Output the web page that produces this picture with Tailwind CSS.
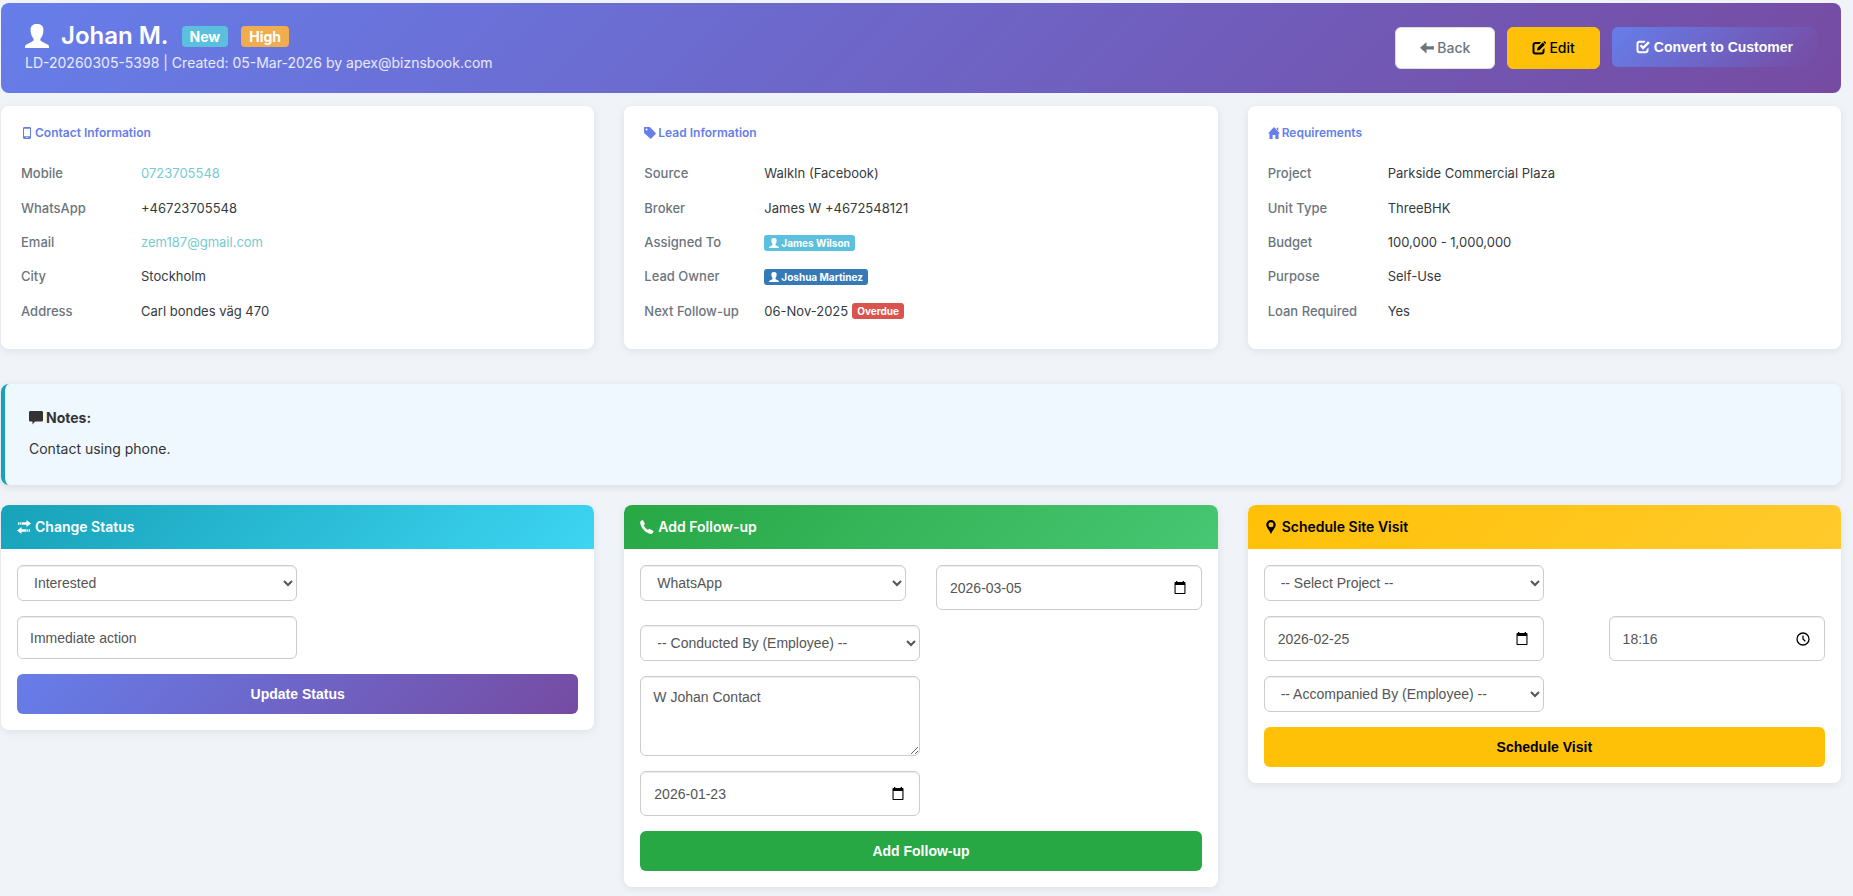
<!DOCTYPE html>
<html lang="en">
<head>
  <meta charset="UTF-8" />
  <meta name="viewport" content="width=device-width, initial-scale=1.0" />
  <title>Lead Details</title>
  <script src="https://cdn.jsdelivr.net/npm/@tailwindcss/browser@4"></script>
</head>
<body class="bg-[#f0f4f9] min-h-screen font-['Inter',sans-serif] text-sm leading-5 text-[#333]">

  <!-- Icons -->
  <svg class="hidden" xmlns="http://www.w3.org/2000/svg">
    <symbol id="i-user" viewBox="0 0 24 24"><path d="M12 0C8 0 5.600 2 5.600 5.500c0 3 .5 5.500 1.600 7.300.9 1.500 1.500 1.800 1.500 2.800 0 1-.7 1.500-1.900 2.100L2 20.200C.6 20.900 0 21.500 0 22.600V24h24v-1.400c0-1.100-.6-1.700-2-2.400l-4.800-2.500c-1.200-.6-1.900-1.100-1.900-2.100 0-1 .6-1.300 1.500-2.800 1.100-1.800 1.600-4.300 1.600-7.300C18.400 2 16 0 12 0z"/></symbol>
    <symbol id="i-phone" viewBox="0 0 14 14"><path fill-rule="evenodd" d="M4 0h6a1.700 1.700 0 0 1 1.700 1.700v10.600A1.700 1.700 0 0 1 10 14H4a1.700 1.700 0 0 1-1.700-1.700V1.700A1.700 1.700 0 0 1 4 0zM3.500 1.900v9h7v-9zM6 11.900v1h2v-1z"/></symbol>
    <symbol id="i-tag" viewBox="0 0 14 14"><path fill-rule="evenodd" d="M.6 0h5.600c.4 0 .8.200 1.100.5l6.300 6.500c.4.400.4.900 0 1.300L8.500 13.500c-.4.400-.9.400-1.300 0L.5 7.200C.2 6.900 0 6.500 0 6.100V.6C0 .2.200 0 .6 0zM3 1.800a1.200 1.200 0 1 0 0 2.400 1.200 1.200 0 0 0 0-2.400z"/></symbol>
    <symbol id="i-home" viewBox="0 0 14 14"><path d="M7 0 14 7.500h-1.700V14H8.600V9.200H5.400V14H1.700V7.500H0z"/><path d="M10 1h2v3.500l-2-2z"/></symbol>
    <symbol id="i-left" viewBox="0 0 14 14"><path d="M6.500 1.200v4H14v3.200H6.500v4L0 6.800z"/></symbol>
    <symbol id="i-edit" viewBox="0 0 14 14"><path d="M9 1H3.500A3 3 0 0 0 .5 4v6.500a3 3 0 0 0 3 3h6a3 3 0 0 0 3-3V7l-2 2v1.500a1 1 0 0 1-1 1h-6a1 1 0 0 1-1-1V4a1 1 0 0 1 1-1H7.500z"/><path d="m5 9.500.6-2.800L10.700 1.600l2.100 2.100-5.100 5.200zM11.300 1l.7-.7c.2-.2.400-.2.600 0l1.300 1.300c.2.200.2.400 0 .6l-.7.8z"/></symbol>
    <symbol id="i-check" viewBox="0 0 14 14"><path d="M9.500.8h-6a3 3 0 0 0-3 3v6.500a3 3 0 0 0 3 3h6a3 3 0 0 0 3-3V7.500l-2 2v.8a1 1 0 0 1-1 1h-6a1 1 0 0 1-1-1V3.800a1 1 0 0 1 1-1h5z"/><path d="m3.800 6 1.500-1.500L7 6.200l5-5 1.800 1.700L7 9.700z"/></symbol>
    <symbol id="i-comment" viewBox="0 0 14 14"><path d="M1.300 0h11.400c.7 0 1.300.6 1.300 1.300v7.900c0 .7-.6 1.300-1.300 1.300H6L3.500 13.500v-3H1.300C.6 10.500 0 9.900 0 9.200V1.300C0 .6.600 0 1.300 0z"/></symbol>
    <symbol id="i-transfer" viewBox="0 0 14 14"><path d="M9.500 0 14 3.500 9.500 7V4.800H4.500V2.300h5zM1 2.300h1v2.500H1zM2.600 2.300h1.200v2.500H2.600zM4.500 7 0 10.500 4.500 14v-2.200h5V9.300h-5zM10.200 9.300h1.200v2.500h-1.200zM12 9.300h1v2.500h-1z"/></symbol>
    <symbol id="i-call" viewBox="0 0 14 14"><path d="M.8 1.100 2.200.2c.3-.2.700-.1.900.2l1.700 3.100c.2.300.1.700-.2.900l-1 .7c.8 1.900 2.500 3.700 4.400 4.900l.9-.9c.2-.3.600-.4.900-.2l3.500 2c.3.200.4.600.2.900l-.8 1.300c-.4.600-1 .9-1.700.8C5.700 13.200.9 8.300.2 2.800c-.1-.7.100-1.300.6-1.700z"/></symbol>
    <symbol id="i-pin" viewBox="0 0 14 14"><path fill-rule="evenodd" d="M7 0a4.700 4.700 0 0 1 4.700 4.700C11.700 7.700 9 9.500 7 14 5 9.500 2.300 7.700 2.300 4.700A4.700 4.700 0 0 1 7 0zm0 2.200a2.500 2.500 0 1 0 0 5 2.500 2.500 0 0 0 0-5z"/></symbol>
    <symbol id="i-calendar" viewBox="0 0 14 14"><path fill-rule="evenodd" d="M3 0h1.300v1h5.400V0H11v1h.7a.8.8 0 0 1 .8.800v10.400a.8.8 0 0 1-.8.800H2.300a.8.8 0 0 1-.8-.8V1.800a.8.8 0 0 1 .8-.8H3zM2.600 4v7.900h8.800V4z"/></symbol>
    <symbol id="i-clock" viewBox="0 0 14 14"><path fill="none" stroke="currentColor" stroke-width="1.300" d="M7 1a6 6 0 1 1 0 12A6 6 0 0 1 7 1zM7 3.500V7l2.300 2.200"/></symbol>
  </svg>

  <div class="pt-[3px] pr-3 pb-2 pl-px">

    <!-- Header -->
    <header class="flex items-center justify-between rounded-lg bg-[linear-gradient(135deg,#667eea_0%,#764ba2_100%)] px-6 py-5 text-white">
      <div>
        <h1 class="flex items-center text-2xl leading-[26px] font-semibold">
          <svg class="size-6 mr-3 fill-current"><use href="#i-user" /></svg>
          Johan M.
          <span class="ml-[13px] rounded bg-[#5bc0de] px-2 text-sm leading-[21px] font-bold">New</span>
          <span class="ml-[13px] rounded bg-[#f0ad4e] px-2 text-sm leading-[21px] font-bold">High</span>
        </h1>
        <p class="mt-1 text-white/85">LD-20260305-5398 | Created: 05-Mar-2026 by apex@biznsbook.com</p>
      </div>
      <div class="flex items-start gap-3">
        <a href="#" class="flex items-center gap-[3px] rounded-md border border-[#ddd] bg-white px-6 py-[10px] font-medium text-[#6c757d]"><svg class="size-[14px] fill-current"><use href="#i-left" /></svg>Back</a>
        <a href="#" class="flex items-center gap-[3px] rounded-md border border-[#ffc107] bg-[#ffc107] px-6 py-[10px] font-medium text-black"><svg class="size-[14px] fill-current"><use href="#i-edit" /></svg>Edit</a>
        <button type="button" class="flex items-center gap-1 rounded-md bg-[linear-gradient(135deg,#667eea_0%,#764ba2_100%)] px-6 py-[10px] font-['Liberation_Sans',sans-serif] font-bold"><svg class="size-[14px] fill-current"><use href="#i-check" /></svg>Convert to Customer</button>
      </div>
    </header>

    <!-- Details -->
    <div class="mt-[13px] grid grid-cols-3 gap-[30px] text-[13px]">
      <section class="rounded-lg bg-white px-5 pt-[17px] pb-[21px] shadow-[0_2px_8px_rgba(0,0,0,0.08)]">
        <h2 class="mb-[13px] flex items-center gap-[2px] text-xs leading-5 font-semibold text-[#667eea]"><svg class="size-3 fill-current"><use href="#i-phone" /></svg>Contact Information</h2>
        <dl class="grid min-h-[172px] grid-cols-[120px_1fr] grid-rows-5 items-center leading-5 text-[#343a40] [&_dt]:font-medium [&_dt]:text-[#6c757d]">
          <dt>Mobile</dt><dd><a href="#" class="text-[#76cbd1]">0723705548</a></dd>
          <dt>WhatsApp</dt><dd>+46723705548</dd>
          <dt>Email</dt><dd><a href="#" class="text-[#76cbd1]">zem187@gmail.com</a></dd>
          <dt>City</dt><dd>Stockholm</dd>
          <dt>Address</dt><dd>Carl bondes väg 470</dd>
        </dl>
      </section>

      <section class="rounded-lg bg-white px-5 pt-[17px] pb-[21px] shadow-[0_2px_8px_rgba(0,0,0,0.08)]">
        <h2 class="mb-[13px] flex items-center gap-[2px] text-xs leading-5 font-semibold text-[#667eea]"><svg class="size-3 fill-current"><use href="#i-tag" /></svg>Lead Information</h2>
        <dl class="grid min-h-[172px] grid-cols-[120px_1fr] grid-rows-5 items-center leading-5 text-[#343a40] [&_dt]:font-medium [&_dt]:text-[#6c757d]">
          <dt>Source</dt><dd>WalkIn (Facebook)</dd>
          <dt>Broker</dt><dd>James W +4672548121</dd>
          <dt>Assigned To</dt>
          <dd class="flex pt-[2px]"><span class="flex items-center gap-[2px] rounded-[3px] bg-[#5bc0de] px-[5px] text-[10px] leading-4 font-bold text-white"><svg class="size-[10px] fill-current"><use href="#i-user" /></svg>James Wilson</span></dd>
          <dt>Lead Owner</dt>
          <dd class="flex pt-[2px]"><span class="flex items-center gap-[2px] rounded-[3px] bg-[#337ab7] px-[5px] text-[10px] leading-4 font-bold text-white"><svg class="size-[10px] fill-current"><use href="#i-user" /></svg>Joshua Martinez</span></dd>
          <dt>Next Follow-up</dt>
          <dd class="flex items-center gap-1">06-Nov-2025 <span class="rounded-[3px] bg-[#d9534f] px-[5px] text-[10px] leading-4 font-bold text-white">Overdue</span></dd>
        </dl>
      </section>

      <section class="rounded-lg bg-white px-5 pt-[17px] pb-[21px] shadow-[0_2px_8px_rgba(0,0,0,0.08)]">
        <h2 class="mb-[13px] flex items-center gap-[2px] text-xs leading-5 font-semibold text-[#667eea]"><svg class="size-3 fill-current"><use href="#i-home" /></svg>Requirements</h2>
        <dl class="grid min-h-[172px] grid-cols-[120px_1fr] grid-rows-5 items-center leading-5 text-[#343a40] [&_dt]:font-medium [&_dt]:text-[#6c757d]">
          <dt>Project</dt><dd>Parkside Commercial Plaza</dd>
          <dt>Unit Type</dt><dd>ThreeBHK</dd>
          <dt>Budget</dt><dd>100,000 - 1,000,000</dd>
          <dt>Purpose</dt><dd>Self-Use</dd>
          <dt>Loan Required</dt><dd>Yes</dd>
        </dl>
      </section>
    </div>

    <!-- Notes -->
    <section class="mt-[35px] rounded-lg border-l-4 border-[#17a2b8] bg-[#f0f8ff] px-6 pt-6 pb-[26px] shadow-[0_2px_8px_rgba(0,0,0,0.1)]">
      <h2 class="flex items-center gap-[3px] font-bold"><svg class="size-[14px] fill-current"><use href="#i-comment" /></svg>Notes:</h2>
      <p class="mt-[11px]">Contact using phone.</p>
    </section>

    <!-- Actions -->
    <div class="mt-5 grid grid-cols-3 items-start gap-[30px]">
      <section class="overflow-hidden rounded-lg bg-white shadow-[0_2px_8px_rgba(0,0,0,0.08)]">
        <h2 class="flex items-center gap-1 bg-[linear-gradient(135deg,#17a2b8,#3dd5f3)] px-4 py-3 font-semibold text-white"><svg class="size-[14px] fill-current"><use href="#i-transfer" /></svg>Change Status</h2>
        <form class="flex flex-col gap-[15px] p-4 font-['Liberation_Sans',sans-serif] text-[#555]">
          <select aria-label="Status" class="h-9 w-full max-w-[280px] rounded-md border border-[#ccc] bg-white px-3 shadow-[inset_0_1px_1px_rgba(0,0,0,0.075)]"><option>Interested</option></select>
          <input type="text" aria-label="Remark" value="Immediate action" class="h-[43px] w-full max-w-[280px] rounded-md border border-[#ccc] px-3 shadow-[inset_0_1px_1px_rgba(0,0,0,0.075)]" />
          <button type="button" class="h-10 rounded-md bg-[linear-gradient(135deg,#667eea_0%,#764ba2_100%)] font-bold text-white">Update Status</button>
        </form>
      </section>

      <section class="overflow-hidden rounded-lg bg-white shadow-[0_2px_8px_rgba(0,0,0,0.08)]">
        <h2 class="flex items-center gap-1 bg-[linear-gradient(135deg,#28a745,#48c774)] px-4 py-3 font-semibold text-white"><svg class="size-[14px] fill-current"><use href="#i-call" /></svg>Add Follow-up</h2>
        <form class="flex flex-col gap-[15px] p-4 font-['Liberation_Sans',sans-serif] text-[#555]">
          <div class="grid grid-cols-2 items-start gap-[30px]">
            <select aria-label="Channel" class="h-9 w-full max-w-[280px] rounded-md border border-[#ccc] bg-white px-3 shadow-[inset_0_1px_1px_rgba(0,0,0,0.075)]"><option>WhatsApp</option></select>
            <div class="flex h-[45px] max-w-[280px] items-center rounded-md border border-[#ccc] px-[13px] shadow-[inset_0_1px_1px_rgba(0,0,0,0.075)]">
              <input type="text" aria-label="Follow-up date" value="2026-03-05" class="min-w-0 flex-1" />
              <button type="button" aria-label="Pick date" class="mr-px text-black"><svg class="size-[14px] fill-current"><use href="#i-calendar" /></svg></button>
            </div>
          </div>
          <select aria-label="Conducted by" class="h-9 w-full max-w-[280px] rounded-md border border-[#ccc] bg-white px-3 shadow-[inset_0_1px_1px_rgba(0,0,0,0.075)]"><option>-- Conducted By (Employee) --</option></select>
          <textarea aria-label="Remarks" class="h-20 w-full max-w-[280px] rounded-md border border-[#ccc] px-3 py-[10px] shadow-[inset_0_1px_1px_rgba(0,0,0,0.075)]">W Johan Contact</textarea>
          <div class="flex h-[45px] max-w-[280px] items-center rounded-md border border-[#ccc] px-[13px] shadow-[inset_0_1px_1px_rgba(0,0,0,0.075)]">
            <input type="text" aria-label="Next follow-up date" value="2026-01-23" class="min-w-0 flex-1" />
            <button type="button" aria-label="Pick date" class="mr-px text-black"><svg class="size-[14px] fill-current"><use href="#i-calendar" /></svg></button>
          </div>
          <button type="button" class="h-10 rounded-md bg-[#28a745] font-bold text-white">Add Follow-up</button>
        </form>
      </section>

      <section class="overflow-hidden rounded-lg bg-white shadow-[0_2px_8px_rgba(0,0,0,0.08)]">
        <h2 class="flex items-center gap-1 bg-[linear-gradient(135deg,#ffc107,#ffca2c)] px-4 py-3 font-semibold text-black"><svg class="size-[14px] fill-current"><use href="#i-pin" /></svg>Schedule Site Visit</h2>
        <form class="flex flex-col gap-[15px] p-4 font-['Liberation_Sans',sans-serif] text-[#555]">
          <select aria-label="Project" class="h-9 w-full max-w-[280px] rounded-md border border-[#ccc] bg-white px-3 shadow-[inset_0_1px_1px_rgba(0,0,0,0.075)]"><option>-- Select Project --</option></select>
          <div class="grid grid-cols-12 gap-[30px]">
            <div class="col-span-7 flex h-[45px] max-w-[280px] items-center rounded-md border border-[#ccc] px-[13px] shadow-[inset_0_1px_1px_rgba(0,0,0,0.075)]">
              <input type="text" aria-label="Visit date" value="2026-02-25" class="min-w-0 flex-1" />
              <button type="button" aria-label="Pick date" class="mr-px text-black"><svg class="size-[14px] fill-current"><use href="#i-calendar" /></svg></button>
            </div>
            <div class="col-span-5 flex h-[45px] max-w-[280px] items-center rounded-md border border-[#ccc] px-[13px] shadow-[inset_0_1px_1px_rgba(0,0,0,0.075)]">
              <input type="text" aria-label="Visit time" value="18:16" class="min-w-0 flex-1" />
              <button type="button" aria-label="Pick time" class="mr-px text-black"><svg class="size-[14px]"><use href="#i-clock" /></svg></button>
            </div>
          </div>
          <select aria-label="Accompanied by" class="h-9 w-full max-w-[280px] rounded-md border border-[#ccc] bg-white px-3 shadow-[inset_0_1px_1px_rgba(0,0,0,0.075)]"><option>-- Accompanied By (Employee) --</option></select>
          <button type="button" class="h-10 rounded-md bg-[#ffc107] font-bold text-black">Schedule Visit</button>
        </form>
      </section>
    </div>
  </div>

</body>
</html>
